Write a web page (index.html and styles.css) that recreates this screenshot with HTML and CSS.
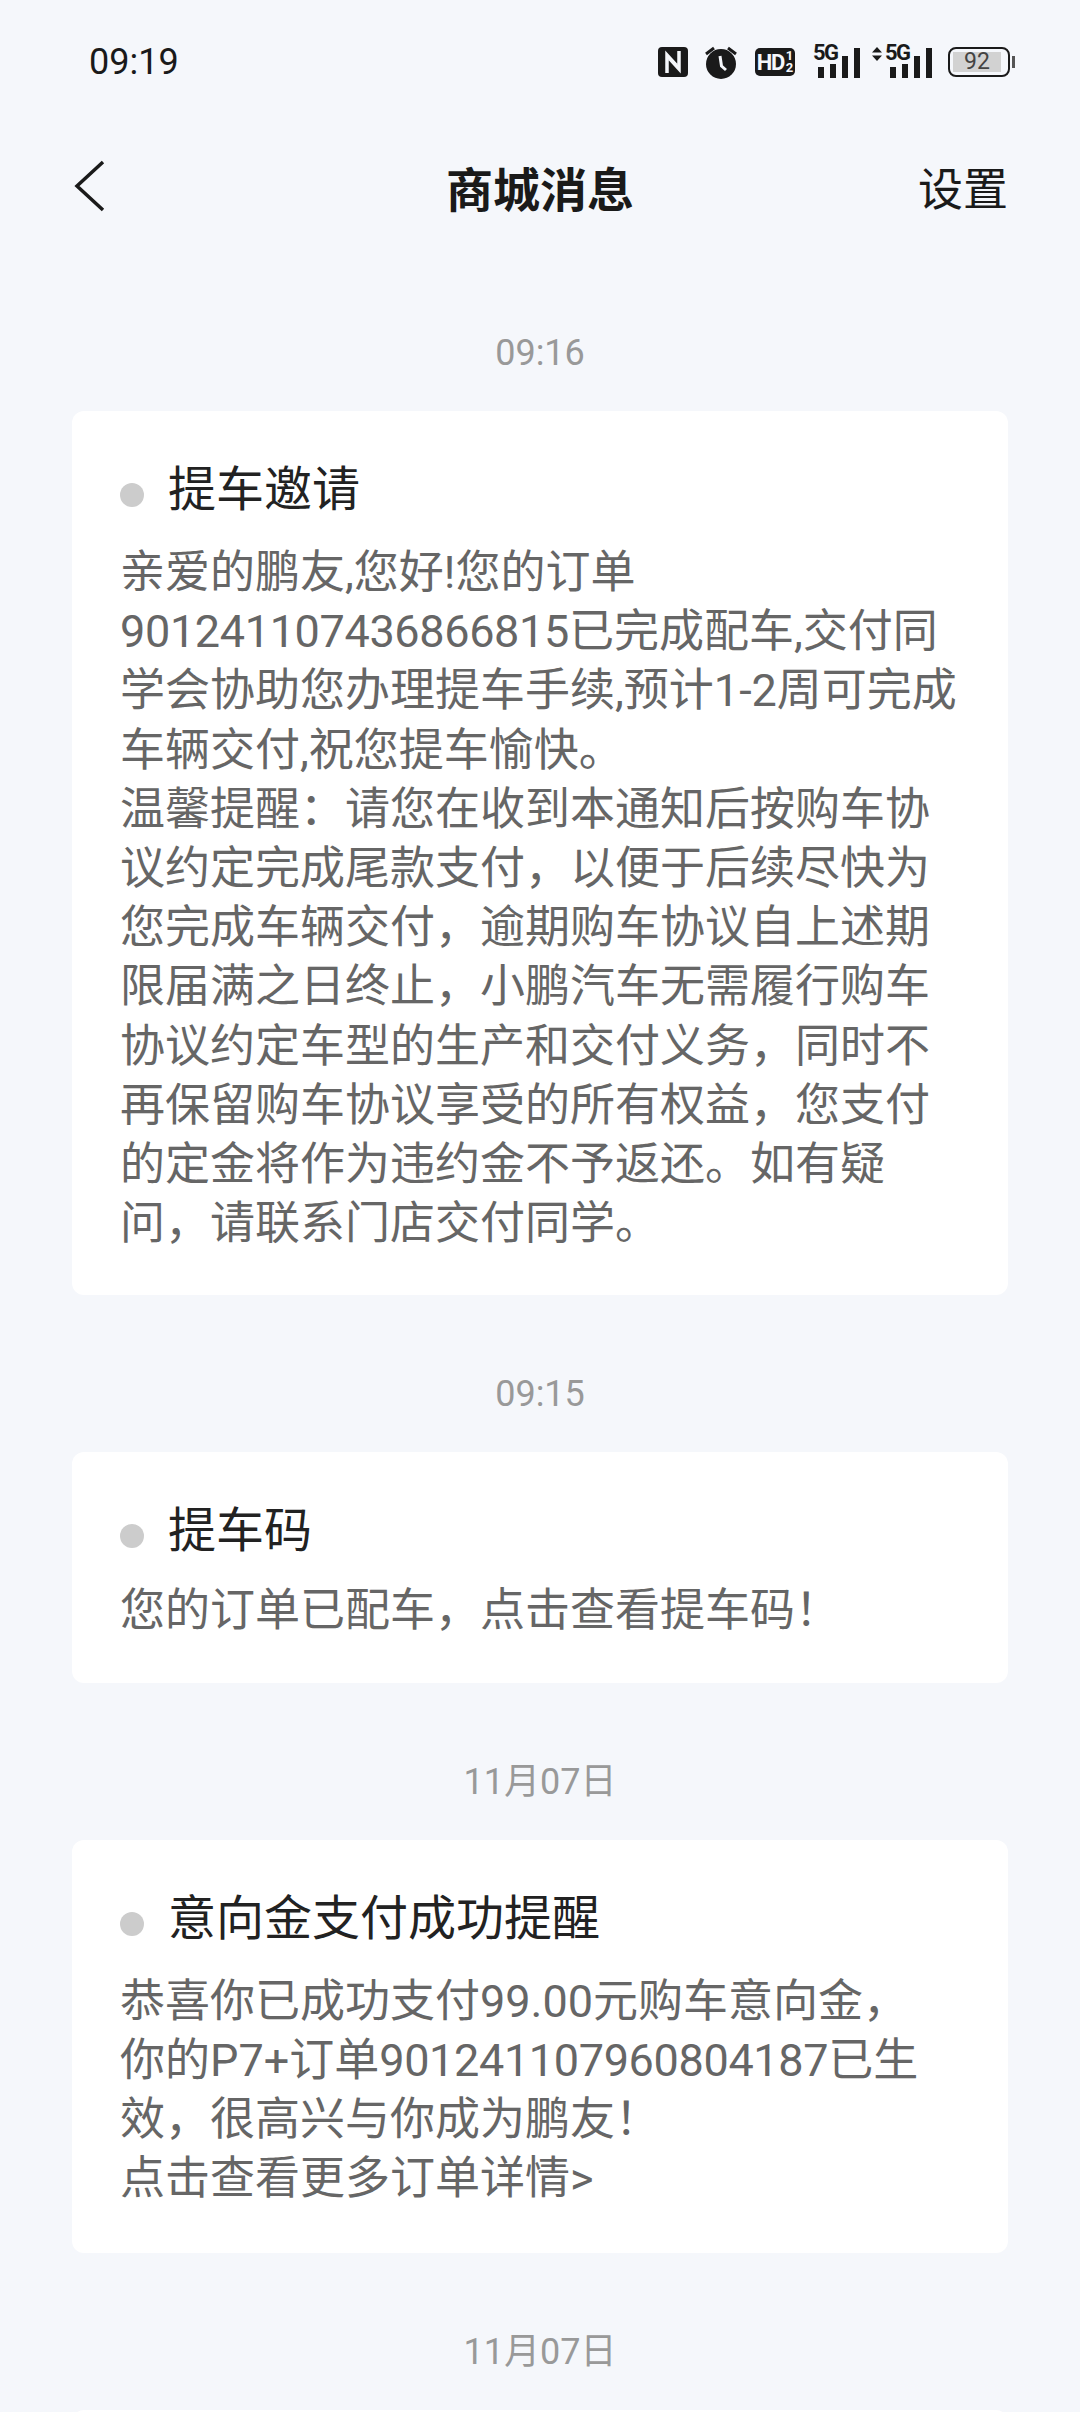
FILE: index.html
```html
<!DOCTYPE html>
<html lang="zh-CN">
<head>
  <meta charset="UTF-8">
  <meta name="viewport" content="width=device-width, initial-scale=1.0">
  <title>商城消息</title>
  <link rel="stylesheet" href="styles.css">
</head>
<body>
  <div class="page">
    <div class="status-bar">
      <span class="clock">09:19</span>
      <div class="status-icons">
        <svg class="icon-nfc" width="30" height="30" viewBox="0 0 30 30">
          <rect width="30" height="30" rx="4" fill="#1a1a1a"/>
          <path d="M9 26V8l9 10M21 4v18l-9-10" fill="none" stroke="#f5f7fb" stroke-width="3.500"/>
        </svg>
        <svg class="icon-alarm" width="32" height="33" viewBox="0 0 32 33">
          <circle cx="16" cy="18" r="15" fill="#1a1a1a"/>
          <path d="M1 8l8-6M31 8l-8-6" stroke="#1a1a1a" stroke-width="3"/>
          <path d="M15 10l1.500 10 4.500 4" fill="none" stroke="#f5f7fb" stroke-width="3"/>
        </svg>
        <span class="hd-badge">HD<span class="hd-frac"><i>1</i><i>2</i></span></span>
        <div class="signal">
          <span class="net-label">5G</span>
          <span class="bars"><b class="b1"></b><b class="b2"></b><b class="b3"></b><b class="b4"></b></span>
        </div>
        <div class="signal signal-data">
          <svg class="updown" width="10" height="14" viewBox="0 0 10 14"><path d="M5 0l5 5.500H0zM5 14l5-5.500H0z" fill="#1a1a1a"/></svg>
          <span class="net-label">5G</span>
          <span class="bars"><b class="b1"></b><b class="b2"></b><b class="b3"></b><b class="b4"></b></span>
        </div>
        <div class="battery">
          <div class="battery-body"><span class="battery-fill">92</span></div>
          <span class="battery-nub"></span>
        </div>
      </div>
    </div>

    <div class="nav-bar">
      <svg class="back" width="32" height="52" viewBox="0 0 32 52"><path d="M29 2L3 26l26 24" fill="none" stroke="#1a1a1a" stroke-width="3.500"/></svg>
      <h1>商城消息</h1>
      <span class="nav-action">设置</span>
    </div>

    <div class="msg-time">09:16</div>
    <div class="card">
      <div class="card-title"><span class="dot"></span>提车邀请</div>
      <p>亲爱的鹏友,您好!您的订单<br><span class="num">901241107436866815</span>已完成配车,交付同<br>学会协助您办理提车手续,预计1-2周可完成<br>车辆交付,祝您提车愉快。<br>温馨提醒：请您在收到本通知后按购车协<br>议约定完成尾款支付，以便于后续尽快为<br>您完成车辆交付，逾期购车协议自上述期<br>限届满之日终止，小鹏汽车无需履行购车<br>协议约定车型的生产和交付义务，同时不<br>再保留购车协议享受的所有权益，您支付<br>的定金将作为违约金不予返还。如有疑<br>问，请联系门店交付同学。</p>
    </div>

    <div class="msg-time">09:15</div>
    <div class="card card-brief">
      <div class="card-title"><span class="dot"></span>提车码</div>
      <p>您的订单已配车，点击查看提车码！</p>
    </div>

    <div class="msg-time">11月07日</div>
    <div class="card card-order">
      <div class="card-title"><span class="dot"></span>意向金支付成功提醒</div>
      <p>恭喜你已成功支付99.00元购车意向金，<br>你的P7+订单<span class="num">901241107960804187</span>已生<br>效，很高兴与你成为鹏友！<br>点击查看更多订单详情&gt;</p>
    </div>

    <div class="msg-time">11月07日</div>
    <div class="card"></div>
  </div>
</body>
</html>
```

FILE: styles.css
```css
html, body {
  margin: 0;
  padding: 0;
}
body {
  font-family: Roboto, "Noto Sans CJK SC", sans-serif;
  background-color: #f5f7fb;
}
.page {
  height: 2412px;
  overflow: hidden;
}
.status-bar {
  display: flex;
  justify-content: space-between;
  align-items: center;
  height: 124px;
  padding: 0 65px 0 89px;
  color: #1a1a1a;
}
.clock {
  font-size: 36px;
}
.status-icons {
  display: flex;
  align-items: center;
}
.icon-nfc {
  margin-right: 17px;
}
.icon-alarm {
  margin-right: 18px;
}
.hd-badge {
  display: flex;
  align-items: center;
  justify-content: center;
  width: 40px;
  height: 28px;
  margin-right: 18px;
  border-radius: 5px;
  background-color: #1a1a1a;
  color: #f5f7fb;
  font-size: 22px;
  font-weight: 700;
  letter-spacing: -1.500px;
}
.hd-frac {
  display: flex;
  flex-direction: column;
  margin-left: 2px;
  font-size: 13px;
  line-height: 12px;
  letter-spacing: 0;
}
.hd-frac i {
  font-style: normal;
}
.signal {
  position: relative;
  width: 47px;
  height: 32px;
  margin-right: 12px;
}
.signal-data {
  width: 60px;
  margin-right: 16px;
}
.net-label {
  position: absolute;
  left: 0;
  top: -4px;
  font-size: 22px;
  line-height: 22px;
  font-weight: 700;
  letter-spacing: -1.500px;
}
.signal-data .net-label {
  left: 13px;
}
.updown {
  position: absolute;
  left: 0;
  top: 1px;
}
.bars {
  position: absolute;
  right: 0;
  bottom: 0;
  display: flex;
  align-items: flex-end;
  gap: 6px;
}
.bars b {
  display: block;
  width: 6px;
  background-color: #1a1a1a;
}
.bars .b1 { height: 11px; }
.bars .b2 { height: 14px; }
.bars .b3 { height: 22px; }
.bars .b4 { height: 30px; }
.battery {
  display: flex;
  align-items: center;
}
.battery-body {
  box-sizing: border-box;
  width: 62px;
  height: 30px;
  padding: 3px 0;
  border: 2px solid #1a1a1a;
  border-radius: 8px;
}
.battery-fill {
  display: block;
  width: 48px;
  height: 20px;
  margin-left: 3px;
  background-color: #d2d2d2;
  color: #444;
  font-size: 23px;
  line-height: 20px;
  text-align: center;
}
.battery-nub {
  width: 3px;
  height: 12px;
  margin-left: 2px;
  background-color: #555;
}
.nav-bar {
  position: relative;
  display: flex;
  align-items: center;
  justify-content: space-between;
  height: 124px;
  padding: 0 72px 6px 72px;
  color: #1a1a1a;
}
.back {
  margin-left: 2px;
}
.nav-bar h1 {
  position: absolute;
  left: 0;
  right: 0;
  margin: 0;
  font-size: 47px;
  font-weight: 700;
  text-align: center;
}
.nav-action {
  font-size: 45px;
}
.msg-time {
  height: 50px;
  padding: 74px 0 33px;
  color: #999;
  font-size: 36px;
  line-height: 50px;
  text-align: center;
}
.card {
  padding: 49px 46px 42px 48px;
  border-radius: 12px;
  background-color: #fff;
  margin: 0 72px;
}
.card-title {
  display: flex;
  align-items: center;
  margin-bottom: 23px;
  color: #222;
  font-size: 48px;
  line-height: 60px;
}
.card-brief .card-title {
  margin-bottom: 20px;
}
.card-order {
  padding-bottom: 45px;
}
.dot {
  width: 24px;
  height: 24px;
  margin: 10px 24px 0 0;
  border-radius: 50%;
  background-color: #ccc;
}
.card p {
  margin: 0;
  color: #666;
  font-size: 45px;
  line-height: 59.200px;
}
.num {
  letter-spacing: -0.350px;
}
```
